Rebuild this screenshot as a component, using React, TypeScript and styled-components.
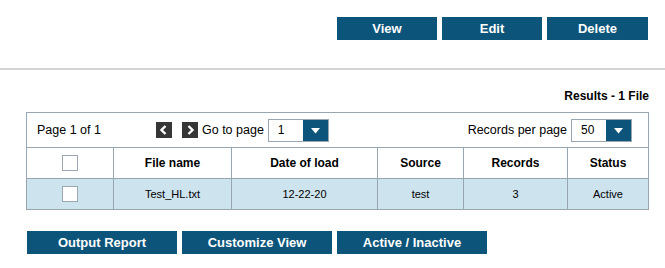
import React from 'react';
import styled, { createGlobalStyle } from 'styled-components';

const GlobalStyle = createGlobalStyle`
  body {
    margin: 0;
    background: #fff;
    font-family: "Liberation Sans", Arial, sans-serif;
    color: #000;
  }
`;

const BLUE = '#0c5479';
const LINE = '#98a6b2';

const Page = styled.div`
  width: 665px;
`;

const TopBar = styled.div`
  height: 68px;
  box-sizing: border-box;
  padding: 17px 17px 0 0;
  display: flex;
  justify-content: flex-end;
  gap: 5px;
`;

const Divider = styled.div`
  height: 2px;
  background: #d4d4d4;
`;

const Button = styled.button<{ $w: number }>`
  width: ${(p) => p.$w}px;
  height: 23px;
  padding: 0;
  border: none;
  background: ${BLUE};
  color: #fff;
  font-family: "Liberation Sans", Arial, sans-serif;
  font-weight: bold;
  font-size: 13px;
  line-height: 23px;
  cursor: pointer;
`;

const Results = styled.div`
  margin-top: 19px;
  padding-right: 16px;
  text-align: right;
  font-size: 12px;
  font-weight: bold;
  line-height: 14px;
`;

const Grid = styled.div`
  margin: 9px 0 0 26px;
  width: 623px;
  box-sizing: border-box;
  border: 1px solid ${LINE};
`;

const Pager = styled.div`
  height: 34px;
  display: flex;
  align-items: center;
  padding: 0 16px 0 10px;
  font-size: 12.5px;
`;

const PageLabel = styled.span`
  width: 119px;
`;

const ArrowBtn = styled.span<{ $gap: number }>`
  width: 16px;
  height: 16px;
  background: #363636;
  margin-right: ${(p) => p.$gap}px;
  display: flex;
  align-items: center;
  justify-content: center;
`;

const Label = styled.span`
  margin-right: 4px;
`;

const Spacer = styled.div`
  flex: 1;
`;

const Select = styled.div`
  width: 61px;
  height: 23px;
  box-sizing: border-box;
  border: 1px solid ${LINE};
  display: flex;
  align-items: stretch;
  background: #fff;
  margin-top: 1px;
`;

const SelectValue = styled.span`
  flex: 1;
  padding-left: 9px;
  font-size: 12px;
  line-height: 21px;
`;

const SelectArrow = styled.span`
  width: 25px;
  background: ${BLUE};
  display: flex;
  align-items: center;
  justify-content: center;
`;

const Row = styled.div<{ $body?: boolean }>`
  display: grid;
  grid-template-columns: 87px 118px 146px 86px 104px 80px;
  background: ${(p) => (p.$body ? '#cde3ee' : '#fff')};
`;

const Cell = styled.div<{ $head?: boolean }>`
  height: 31px;
  box-sizing: border-box;
  border-top: 1px solid ${LINE};
  border-right: 1px solid ${LINE};
  display: flex;
  align-items: center;
  justify-content: center;
  font-size: ${(p) => (p.$head ? '12px' : '11px')};
  font-weight: ${(p) => (p.$head ? 'bold' : 'normal')};

  &:last-child {
    border-right: none;
  }
`;

const Check = styled.span`
  width: 16px;
  height: 16px;
  box-sizing: border-box;
  border: 1px solid #9ba8b4;
  background: #fff;
`;

const Actions = styled.div`
  margin: 21px 0 0 27px;
  display: flex;
  gap: 5px;
`;

const Chevron = ({ dir }: { dir: 'left' | 'right' }) => (
  <svg width="16" height="16" viewBox="0 0 16 16">
    <polyline
      points={dir === 'left' ? '9.5,4 5.5,8 9.5,12' : '6.5,4 10.5,8 6.5,12'}
      fill="none"
      stroke="#fff"
      strokeWidth="2.4"
    />
  </svg>
);

const Caret = () => (
  <svg width="9" height="6" viewBox="0 0 9 6">
    <polygon points="0,0 9,0 4.5,5.5" fill="#fff" />
  </svg>
);

const headers = ['File name', 'Date of load', 'Source', 'Records', 'Status'];

const rows = [
  { id: 1, name: 'Test_HL.txt', date: '12-22-20', source: 'test', records: 3, status: 'Active' },
];

const App = () => {
  return (
    <Page>
      <GlobalStyle />
      <TopBar>
        <Button $w={100}>View</Button>
        <Button $w={100}>Edit</Button>
        <Button $w={101}>Delete</Button>
      </TopBar>
      <Divider />

      <Results>Results - 1 File</Results>

      <Grid>
        <Pager>
          <PageLabel>Page 1 of 1</PageLabel>
          <ArrowBtn $gap={10}><Chevron dir="left" /></ArrowBtn>
          <ArrowBtn $gap={4}><Chevron dir="right" /></ArrowBtn>
          <Label>Go to page</Label>
          <Select>
            <SelectValue>1</SelectValue>
            <SelectArrow><Caret /></SelectArrow>
          </Select>
          <Spacer />
          <Label>Records per page</Label>
          <Select>
            <SelectValue>50</SelectValue>
            <SelectArrow><Caret /></SelectArrow>
          </Select>
        </Pager>

        <Row>
          <Cell $head><Check /></Cell>
          {headers.map((h) => (
            <Cell $head key={h}>{h}</Cell>
          ))}
        </Row>
        {rows.map((r) => (
          <Row $body key={r.id}>
            <Cell><Check /></Cell>
            <Cell>{r.name}</Cell>
            <Cell>{r.date}</Cell>
            <Cell>{r.source}</Cell>
            <Cell>{r.records}</Cell>
            <Cell>{r.status}</Cell>
          </Row>
        ))}
      </Grid>

      <Actions>
        <Button $w={150}>Output Report</Button>
        <Button $w={150}>Customize View</Button>
        <Button $w={150}>Active / Inactive</Button>
      </Actions>
    </Page>
  );
};

export default App;
